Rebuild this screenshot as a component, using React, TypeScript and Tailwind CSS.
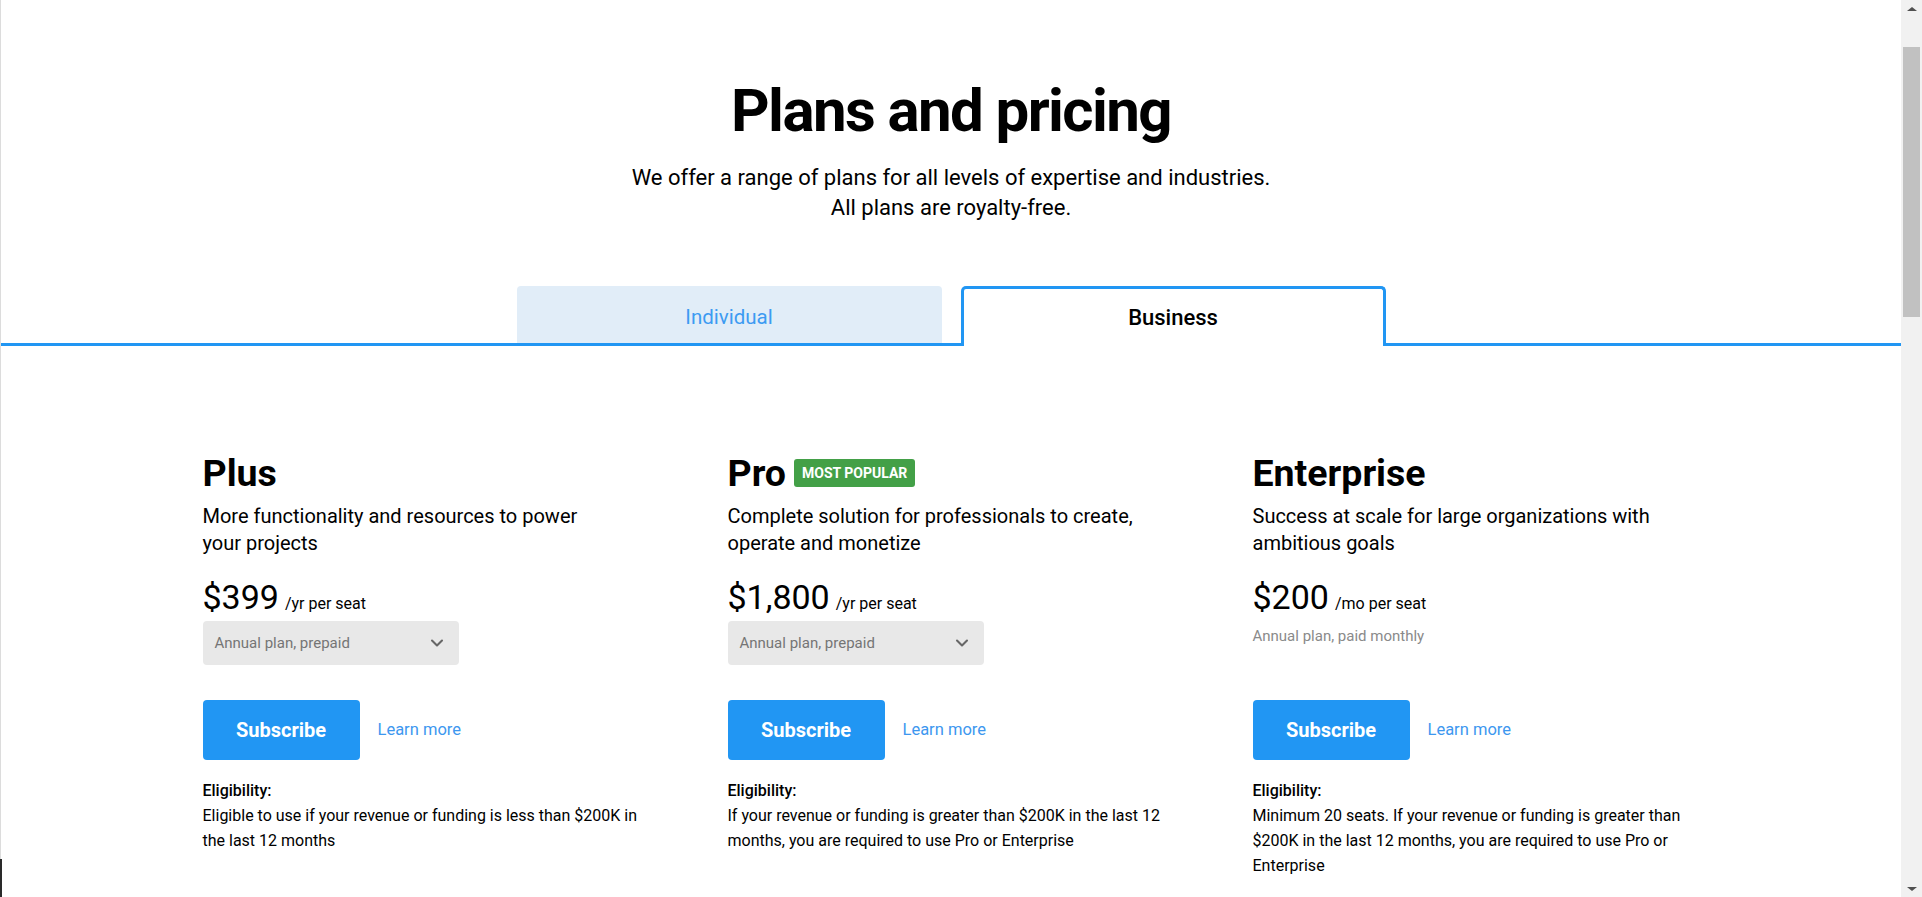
import { ChevronDown } from 'lucide-react';

type Plan = {
  name: string;
  badge?: string;
  description: string;
  price: string;
  unit: string;
  billing: string;
  dropdown: boolean;
  eligibility: string;
};

const plans: Plan[] = [
  {
    name: 'Plus',
    description: 'More functionality and resources to power your projects',
    price: '$399',
    unit: '/yr per seat',
    billing: 'Annual plan, prepaid',
    dropdown: true,
    eligibility: 'Eligible to use if your revenue or funding is less than $200K in the last 12 months',
  },
  {
    name: 'Pro',
    badge: 'MOST POPULAR',
    description: 'Complete solution for professionals to create, operate and monetize',
    price: '$1,800',
    unit: '/yr per seat',
    billing: 'Annual plan, prepaid',
    dropdown: true,
    eligibility:
      'If your revenue or funding is greater than $200K in the last 12 months, you are required to use Pro or Enterprise',
  },
  {
    name: 'Enterprise',
    description: 'Success at scale for large organizations with ambitious goals',
    price: '$200',
    unit: '/mo per seat',
    billing: 'Annual plan, paid monthly',
    dropdown: false,
    eligibility:
      'Minimum 20 seats. If your revenue or funding is greater than $200K in the last 12 months, you are required to use Pro or Enterprise',
  },
];

function PlanColumn({ plan }: { plan: Plan }) {
  return (
    <div className="flex flex-col">
      <div className="flex items-center gap-2">
        <h2 className="text-[37.5px] leading-[44px] font-bold text-black">{plan.name}</h2>
        {plan.badge && (
          <span className="bg-[#43a047] text-white text-[14px] leading-[28px] font-bold px-2 rounded-[3px]">
            {plan.badge}
          </span>
        )}
      </div>
      <p className="mt-2 max-w-[412px] text-[20px] leading-[27px] text-black">{plan.description}</p>

      <div className="mt-5 flex items-baseline gap-[6px]">
        <span className="text-[34px] leading-[40px] text-black">{plan.price}</span>
        <span className="text-[16px] text-black">{plan.unit}</span>
      </div>

      <div className="mt-1 h-[44px]">
        {plan.dropdown ? (
          <div className="w-[256px] h-[44px] bg-[#e8e8e8] rounded-[4px] flex items-center justify-between pl-3 pr-3">
            <span className="text-[15px] text-[#757575]">{plan.billing}</span>
            <ChevronDown className="w-5 h-5 text-[#666]" strokeWidth={2.5} />
          </div>
        ) : (
          <div className="pt-[5px] text-[15px] leading-[20px] text-[#8a8a8a]">{plan.billing}</div>
        )}
      </div>

      <div className="mt-[35px] flex items-center gap-[18px]">
        <button className="w-[157px] h-[60px] bg-[#2196f3] rounded-[4px] text-white text-[20px] font-bold">
          Subscribe
        </button>
        <a className="text-[16.5px] text-[#3d97ef]">Learn more</a>
      </div>

      <div className="mt-[18px] text-[16px] leading-[25px] text-black">
        <div className="font-medium">Eligibility:</div>
        <p>{plan.eligibility}</p>
      </div>
    </div>
  );
}

function Scrollbar() {
  return (
    <div className="fixed top-0 right-0 h-screen w-[21px] bg-[#f1f1f1] flex flex-col items-center">
      <div className="h-[17px] flex items-center justify-center">
        <div className="w-0 h-0 border-l-[5px] border-r-[5px] border-b-[4px] border-l-transparent border-r-transparent border-b-[#505050]" />
      </div>
      <div className="mt-[30px] w-[17px] h-[270px] bg-[#c1c1c1]" />
      <div className="mt-auto h-[17px] flex items-center justify-center">
        <div className="w-0 h-0 border-l-[5px] border-r-[5px] border-t-[4px] border-l-transparent border-r-transparent border-t-[#505050]" />
      </div>
    </div>
  );
}

export default function App() {
  return (
    <div className="min-h-screen bg-white pr-[21px] font-['Roboto',sans-serif]">
      <div className="border-l border-[#dcdcdc] pb-[120px]">
        <div className="pt-[75px] text-center">
          <h1 className="text-[60px] leading-[72px] font-bold tracking-[-1.6px] text-black">Plans and pricing</h1>
          <p className="mt-[16px] text-[22px] leading-[30px] text-black">
            We offer a range of plans for all levels of expertise and industries.
            <br />
            All plans are royalty-free.
          </p>
        </div>

        <div className="mt-[63px] flex justify-center items-end gap-[19px] border-b-[3px] border-[#2196f3]">
          <button className="w-[425px] h-[57px] pt-[6px] bg-[#e1edf8] rounded-t-[4px] text-[20.5px] text-[#3d9bf2]">
            Individual
          </button>
          <button className="w-[425px] h-[60px] -mb-[3px] bg-white border-[3px] border-b-0 border-[#2196f3] rounded-t-[5px] text-[22px] font-medium text-black">
            Business
          </button>
        </div>

        <div className="mt-[105px] w-[1497px] mx-auto grid grid-cols-3 gap-x-[78px]">
          {plans.map((plan) => (
            <PlanColumn key={plan.name} plan={plan} />
          ))}
        </div>
      </div>
      <div className="fixed left-0 bottom-0 w-[2px] h-[38px] bg-[#2a2a2a]" />
      <Scrollbar />
    </div>
  );
}
